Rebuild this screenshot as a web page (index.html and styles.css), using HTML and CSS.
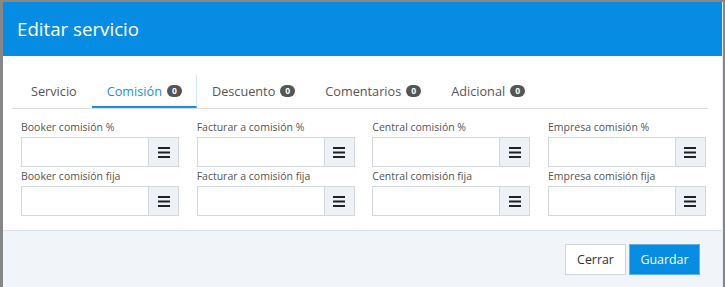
FILE: index.html
```html
<!DOCTYPE html>
<html lang="es">
<head>
<meta charset="utf-8">
<title>Editar servicio</title>
<link rel="stylesheet" href="styles.css">
</head>
<body>
<div class="modal">
  <div class="modal-header">
    <h4 class="modal-title">Editar servicio</h4>
  </div>
  <div class="modal-body">
    <ul class="tabs">
      <li class="tab">Servicio</li>
      <li class="tab active">Comisión <span class="badge">0</span></li>
      <li class="tab">Descuento <span class="badge">0</span></li>
      <li class="tab">Comentarios <span class="badge">0</span></li>
      <li class="tab">Adicional <span class="badge">0</span></li>
    </ul>
    <div class="fields">
      <div class="field"><label>Booker comisión %</label><div class="group"><input type="text"><span class="addon"><svg width="12" height="11" viewBox="0 0 12 11"><rect y="0" width="12" height="2"/><rect y="4.5" width="12" height="2"/><rect y="9" width="12" height="2"/></svg></span></div></div>
      <div class="field"><label>Facturar a comisión %</label><div class="group"><input type="text"><span class="addon"><svg width="12" height="11" viewBox="0 0 12 11"><rect y="0" width="12" height="2"/><rect y="4.5" width="12" height="2"/><rect y="9" width="12" height="2"/></svg></span></div></div>
      <div class="field"><label>Central comisión %</label><div class="group"><input type="text"><span class="addon"><svg width="12" height="11" viewBox="0 0 12 11"><rect y="0" width="12" height="2"/><rect y="4.5" width="12" height="2"/><rect y="9" width="12" height="2"/></svg></span></div></div>
      <div class="field"><label>Empresa comisión %</label><div class="group"><input type="text"><span class="addon"><svg width="12" height="11" viewBox="0 0 12 11"><rect y="0" width="12" height="2"/><rect y="4.5" width="12" height="2"/><rect y="9" width="12" height="2"/></svg></span></div></div>
      <div class="field"><label>Booker comisión fija</label><div class="group"><input type="text"><span class="addon"><svg width="12" height="11" viewBox="0 0 12 11"><rect y="0" width="12" height="2"/><rect y="4.5" width="12" height="2"/><rect y="9" width="12" height="2"/></svg></span></div></div>
      <div class="field"><label>Facturar a comisión fija</label><div class="group"><input type="text"><span class="addon"><svg width="12" height="11" viewBox="0 0 12 11"><rect y="0" width="12" height="2"/><rect y="4.5" width="12" height="2"/><rect y="9" width="12" height="2"/></svg></span></div></div>
      <div class="field"><label>Central comisión fija</label><div class="group"><input type="text"><span class="addon"><svg width="12" height="11" viewBox="0 0 12 11"><rect y="0" width="12" height="2"/><rect y="4.5" width="12" height="2"/><rect y="9" width="12" height="2"/></svg></span></div></div>
      <div class="field"><label>Empresa comisión fija</label><div class="group"><input type="text"><span class="addon"><svg width="12" height="11" viewBox="0 0 12 11"><rect y="0" width="12" height="2"/><rect y="4.5" width="12" height="2"/><rect y="9" width="12" height="2"/></svg></span></div></div>
    </div>
  </div>
  <div class="modal-footer">
    <button class="btn">Cerrar</button>
    <button class="btn primary">Guardar</button>
  </div>
</div>
</body>
</html>
```
FILE: styles.css
```css
html, body {
  margin: 0;
  padding: 0;
  background: #878787;
  font-family: "Open Sans", "Liberation Sans", sans-serif;
  overflow: hidden;
}
.modal {
  margin: 2px 0 0 3px;
  width: 719px;
  background: #fff;
  border-right: 1px solid #e6ecf2;
}
.modal-header {
  background: #068ce3;
  height: 54px;
  display: flex;
  align-items: center;
  padding-left: 14px;
}
.modal-title {
  margin: 0;
  color: #fff;
  font-weight: 400;
  font-size: 18.7px;
  line-height: 24px;
  padding-bottom: 1px;
}
.modal-body {
  padding: 19px 14px 14px 9px;
}
.tabs {
  list-style: none;
  margin: 0;
  padding: 0 0 0 4px;
  display: flex;
  border-bottom: 1px solid #dadde1;
  height: 33px;
}
.tab {
  padding: 0 15px;
  font-size: 12.7px;
  color: #555;
  display: flex;
  align-items: center;
  gap: 5px;
  height: 31px;
}
.tab.active {
  color: #1a8ee2;
  border-bottom: 2px solid #1a8ee2;
  border-right: 1px solid #d4e8f8;
  padding-right: 14px;
}
.badge {
  display: inline-block;
  box-sizing: border-box;
  background: #555;
  color: #fff;
  font-size: 8.5px;
  font-weight: 700;
  line-height: 12px;
  height: 12px;
  min-width: 15px;
  padding: 0 4px;
  border-radius: 6px;
  text-align: center;
}
.fields {
  display: grid;
  grid-template-columns: repeat(4, 158px);
  column-gap: 17.67px;
  padding: 9px 0 0 9px;
}
.field label {
  display: block;
  font-size: 10.5px;
  line-height: 19px;
  color: #555;
}
.group {
  display: flex;
  height: 30px;
}
.group input {
  width: 127px;
  box-sizing: border-box;
  height: 30px;
  border: 1px solid #d3d8de;
  border-right: none;
  margin: 0;
  padding: 0 6px;
  font: inherit;
  outline: none;
}
.addon {
  width: 31px;
  box-sizing: border-box;
  height: 30px;
  background: #eef2f6;
  border: 1px solid #d3d8de;
  display: flex;
  align-items: center;
  justify-content: center;
}
.addon svg {
  fill: #1e2226;
}
.modal-footer {
  background: #f1f5f9;
  border-top: 1px solid #dde3ea;
  height: 60px;
  display: flex;
  justify-content: flex-end;
  align-items: flex-start;
  gap: 3px;
  padding: 13px 22px 0 0;
  box-sizing: border-box;
}
.btn {
  height: 31px;
  width: 61px;
  padding: 0;
  font-family: inherit;
  font-size: 12.4px;
  background: #fff;
  color: #333;
  border: 1px solid #cfd5db;
  border-radius: 0;
  margin: 0;
}
.btn.primary {
  width: 71px;
  background: #068ce3;
  color: #fff;
  border-color: #5db3ee;
}
```
